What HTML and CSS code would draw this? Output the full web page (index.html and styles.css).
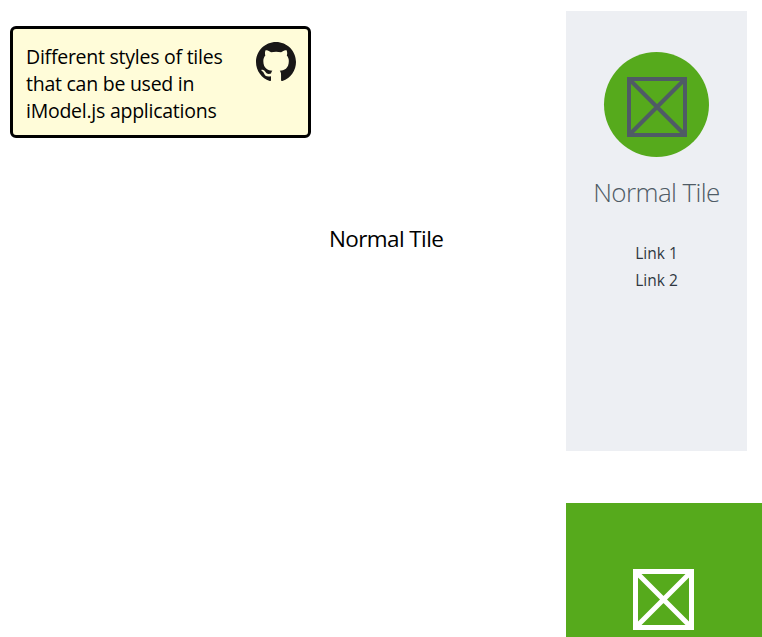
FILE: index.html
```html
<!DOCTYPE html>
<html lang="en">
<head>
<meta charset="utf-8">
<title>Tiles</title>
<link rel="stylesheet" href="styles.css">
</head>
<body>
<main class="page">
  <section class="note">
    <p class="note-text">Different styles of tiles<br>that can be used in<br>iModel.js applications</p>
    <svg class="github" viewBox="0 0 16 16" aria-label="GitHub"><path fill="#191717" d="M8 0C3.58 0 0 3.58 0 8c0 3.54 2.29 6.53 5.47 7.59.4.07.55-.17.55-.38v-1.49c-2.01.37-2.53-.49-2.69-.94-.09-.23-.48-.94-.82-1.13-.28-.15-.68-.52-.01-.53.63-.01 1.08.58 1.23.82.72 1.21 1.72.87 2.33.66.07-.52.28-.87.51-1.07-1.78-.2-3.64-.89-3.64-3.95 0-.87.31-1.59.82-2.15-.08-.2-.36-1.02.08-2.12 0 0 .67-.21 2.2.82.64-.18 1.32-.27 2-.27s1.36.09 2 .27c1.53-1.04 2.2-.82 2.2-.82.44 1.1.16 1.92.08 2.12.51.56.82 1.27.82 2.15 0 3.07-1.87 3.75-3.65 3.95.29.25.54.73.54 1.48v2.2c0 .21.15.46.55.38A8.01 8.01 0 0 0 16 8c0-4.42-3.58-8-8-8z"/><path fill="#fffcd9" d="M6 12.6h4v3.4H6z"/></svg>
  </section>
  <div class="label">Normal Tile</div>
  <div class="samples">
    <article class="tile">
      <div class="badge">
        <svg class="icon" viewBox="0 0 60 60"><path d="M2 2H58V58H2ZM2 2L58 58M58 2L2 58"/></svg>
      </div>
      <h2 class="title">Normal Tile</h2>
      <div class="links"><a class="link">Link 1</a><a class="link">Link 2</a></div>
    </article>
    <article class="featured">
      <svg class="icon-white" viewBox="0 0 61 61"><path d="M2.5 2.5H58.5V58.5H2.5ZM2.5 2.5L58.5 58.5M58.5 2.5L2.5 58.5"/></svg>
    </article>
  </div>
</main>
</body>
</html>
```
FILE: styles.css
```css
* { box-sizing: border-box; }
body {
  margin: 0;
  background: #fff;
  color: #000;
  font-family: "Open Sans", "Noto Sans", sans-serif;
  overflow: hidden;
}
.page {
  display: grid;
  grid-template-columns: 301px 255px 196px;
  height: 637px;
  padding-left: 10px;
  align-items: start;
  overflow: hidden;
}
.note {
  display: flex;
  justify-content: space-between;
  height: 112px;
  margin-top: 26px;
  padding: 13px 12px 0 13px;
  border: 3px solid #000;
  border-radius: 6px;
  background: #fffcd9;
}
.note-text {
  margin: 1px 0 0;
  font-size: 19.5px;
  line-height: 27px;
  letter-spacing: -0.25px;
  white-space: nowrap;
}
.github { width: 40px; height: 40px; }
.label {
  padding: 224px 0 0 18px;
  font-size: 22.5px;
  line-height: 30px;
  letter-spacing: -0.6px;
  white-space: nowrap;
}
.samples {
  display: flex;
  flex-direction: column;
  gap: 52px;
  padding-top: 11px;
}
.tile {
  display: flex;
  flex-direction: column;
  align-items: center;
  width: 181px;
  height: 440px;
  padding-top: 41px;
  background: #edeff3;
}
.badge {
  flex: none;
  width: 105px;
  height: 105px;
  padding: 25px 0 0 23px;
  border-radius: 50%;
  background: #56aa1c;
}
.icon, .icon-white { display: block; fill: none; }
.icon { width: 60px; height: 60px; stroke: #4f5b65; stroke-width: 4; }
.title {
  margin: 17px 0 0;
  font-size: 26px;
  line-height: 36px;
  font-weight: 300;
  letter-spacing: -0.6px;
  color: #4f5b65;
  white-space: nowrap;
}
.links {
  display: flex;
  flex-direction: column;
  margin-top: 30px;
}
.link {
  font-size: 15.5px;
  line-height: 27px;
  color: #2f3741;
}
.featured {
  width: 196px;
  height: 196px;
  padding: 66px 0 0 67.4px;
  background: #56aa1c;
}
.icon-white { width: 61px; height: 61px; stroke: #fff; stroke-width: 5; }
```
